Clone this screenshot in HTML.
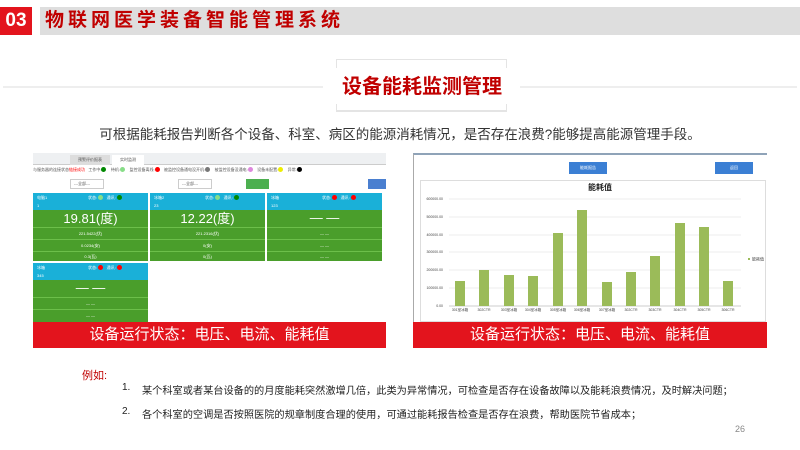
<!DOCTYPE html>
<html><head><meta charset="utf-8"><style>
*{margin:0;padding:0;box-sizing:border-box}
body{width:800px;height:450px;background:#fff;position:relative;overflow:hidden;font-family:"Liberation Sans","Noto Sans CJK SC",sans-serif}
.a{position:absolute}
.card{position:absolute;width:115px;background:#4a9e2b;color:#fff;font-size:4px}
.card .h{background:#1ab0d8;height:17px;position:relative}
.card .row{border-top:1px solid #6cbf4a;text-align:center}
.dot{display:inline-block;width:5px;height:5px;border-radius:50%;vertical-align:middle}
.banner{position:absolute;top:322px;height:26px;background:#e3141d;color:#fff;font-size:15px;text-align:center;line-height:26px}
.bar{position:absolute;width:10px;background:#9bbb59}
.xl{position:absolute;top:308px;font-size:3.5px;color:#444;width:24px;text-align:center}
</style></head><body>
<div class="a" style="left:0;top:7px;width:32px;height:28px;background:#e3141d;color:#fff;font-weight:bold;font-size:19px;line-height:28px;text-align:center">03</div>
<div class="a" style="left:40px;top:7px;width:760px;height:28px;background:#dedede"></div>
<div class="a" style="left:45px;top:7px;height:28px;line-height:28px;color:#c00000;font-weight:bold;font-size:19px;letter-spacing:4px;white-space:nowrap">物联网医学装备智能管理系统</div>

<div class="a" style="left:3px;top:86px;width:320px;height:2px;background:#eee"></div>
<div class="a" style="left:520px;top:86px;width:277px;height:2px;background:#eee"></div>
<div class="a" style="left:336px;top:59px;width:171px;height:53px;border:1px solid #e4e4e4;border-bottom:2px solid #e4e4e4"></div>
<div class="a" style="left:328px;top:68px;width:188px;height:36px;background:#fff"></div>
<div class="a" style="left:328px;top:73px;width:188px;text-align:center;color:#c00000;font-weight:bold;font-size:20px;line-height:28px;white-space:nowrap">设备能耗监测管理</div>

<div class="a" style="left:0;top:123px;width:800px;text-align:center;font-size:13.5px;color:#333;white-space:nowrap">可根据能耗报告判断各个设备、科室、病区的能源消耗情况，是否存在浪费?能够提高能源管理手段。</div>

<!-- left screenshot -->
<div class="a" style="left:33px;top:153px;width:353px;height:12px;background:#eef0f2;border-bottom:1px solid #ccc"></div>
<div class="a" style="left:70px;top:155px;width:40px;height:10px;background:#ddd;font-size:4px;line-height:10px;text-align:center;color:#555">预警评价报表</div>
<div class="a" style="left:112px;top:155px;width:32px;height:10px;background:#fff;font-size:4px;line-height:10px;text-align:center;color:#555">实时监测</div>
<div class="a" style="left:33px;top:166px;font-size:4px;color:#555;white-space:nowrap;line-height:7px">与服务器的连接状态<span style="color:red">链接成功</span>&nbsp;&nbsp; 工作中:<span class="dot" style="background:#080"></span>&nbsp;&nbsp;&nbsp; 待机:<span class="dot" style="background:#8d8"></span>&nbsp;&nbsp;&nbsp; 监控设备离线:<span class="dot" style="background:red"></span>&nbsp;&nbsp;&nbsp; 被监控设备通电没开机:<span class="dot" style="background:#777"></span>&nbsp;&nbsp;&nbsp; 被监控设备没通电:<span class="dot" style="background:#d8d"></span>&nbsp;&nbsp;&nbsp; 设备未配置:<span class="dot" style="background:#ee0"></span>&nbsp;&nbsp;&nbsp; 异常:<span class="dot" style="background:#000"></span></div>
<div class="a" style="left:70px;top:179px;width:34px;height:10px;border:1px solid #ccc;font-size:4px;line-height:8px;padding-left:3px;color:#555">---全部---</div>
<div class="a" style="left:178px;top:179px;width:34px;height:10px;border:1px solid #ccc;font-size:4px;line-height:8px;padding-left:3px;color:#555">---全部---</div>
<div class="a" style="left:246px;top:179px;width:23px;height:10px;background:#4caf50"></div>
<div class="a" style="left:368px;top:179px;width:18px;height:10px;background:#4a7fd0"></div>

<div class="card" style="left:33px;top:193px;height:68px"><div class="h"><span class="a" style="left:4px;top:2px">电脑1</span><span class="a" style="left:4px;top:10px">1</span><span class="a" style="left:55px;top:2px">状态: <span class="dot" style="background:#8d8"></span>&nbsp;&nbsp; 通讯: <span class="dot" style="background:#080"></span></span></div>
<div style="font-size:13px;text-align:center;height:17px;line-height:17px">19.81(度)</div><div class="row" style="height:12px;line-height:11px">221.5422(伏)</div><div class="row" style="height:12px;line-height:11px">0.0234(安)</div><div class="row" style="height:11px;line-height:10px">0.3(瓦)</div></div>
<div class="card" style="left:150px;top:193px;height:68px"><div class="h"><span class="a" style="left:4px;top:2px">冰箱2</span><span class="a" style="left:4px;top:10px">23</span><span class="a" style="left:55px;top:2px">状态: <span class="dot" style="background:#8d8"></span>&nbsp;&nbsp; 通讯: <span class="dot" style="background:#080"></span></span></div>
<div style="font-size:13px;text-align:center;height:17px;line-height:17px">12.22(度)</div><div class="row" style="height:12px;line-height:11px">221.2316(伏)</div><div class="row" style="height:12px;line-height:11px">0(安)</div><div class="row" style="height:11px;line-height:10px">0(瓦)</div></div>
<div class="card" style="left:267px;top:193px;height:68px"><div class="h"><span class="a" style="left:4px;top:2px">冰箱</span><span class="a" style="left:4px;top:10px">123</span><span class="a" style="left:55px;top:2px">状态: <span class="dot" style="background:red"></span>&nbsp;&nbsp; 通讯: <span class="dot" style="background:red"></span></span></div>
<div style="font-size:13px;text-align:center;height:17px;line-height:15px">— —</div><div class="row" style="height:12px;line-height:11px">— —</div><div class="row" style="height:12px;line-height:11px">— —</div><div class="row" style="height:11px;line-height:10px">— —</div></div>
<div class="card" style="left:33px;top:263px;height:59px"><div class="h"><span class="a" style="left:4px;top:2px">冰箱</span><span class="a" style="left:4px;top:10px">345</span><span class="a" style="left:55px;top:2px">状态: <span class="dot" style="background:red"></span>&nbsp;&nbsp; 通讯: <span class="dot" style="background:red"></span></span></div>
<div style="font-size:13px;text-align:center;height:17px;line-height:15px">— —</div><div class="row" style="height:12px;line-height:11px">— —</div><div class="row" style="height:12px;line-height:11px">— —</div></div>
<div class="banner" style="left:33px;width:353px">设备运行状态：电压、电流、能耗值</div>

<!-- right screenshot -->
<div class="a" style="left:413px;top:153px;width:354px;height:170px;border-top:2px solid #8fa3b8;border-left:1px solid #aaa;background:#fff"></div>
<div class="a" style="left:569px;top:162px;width:38px;height:12px;background:#3b7fd4;color:#fff;font-size:4px;line-height:12px;text-align:center">能耗报告</div>
<div class="a" style="left:715px;top:162px;width:38px;height:12px;background:#3b7fd4;color:#fff;font-size:4px;line-height:12px;text-align:center">返回</div>
<div class="a" style="left:420px;top:180px;width:346px;height:142px;border:1px solid #ddd"></div>
<div class="a" style="left:560px;top:182px;width:80px;text-align:center;font-size:8px;font-weight:bold;color:#222">能耗值</div>
<svg class="a" style="left:0;top:0" width="800" height="450">
<g stroke="#ddd" stroke-width="0.6">
<line x1="449" y1="199" x2="741" y2="199"/><line x1="449" y1="217" x2="741" y2="217"/><line x1="449" y1="235" x2="741" y2="235"/><line x1="449" y1="252" x2="741" y2="252"/><line x1="449" y1="270" x2="741" y2="270"/><line x1="449" y1="288" x2="741" y2="288"/></g>
<line x1="449" y1="306" x2="741" y2="306" stroke="#999" stroke-width="0.6"/>
<g font-size="3.5" fill="#444" text-anchor="end" font-family="Liberation Sans">
<text x="443" y="200">600000.00</text><text x="443" y="218">500000.00</text><text x="443" y="236">400000.00</text><text x="443" y="253">300000.00</text><text x="443" y="271">200000.00</text><text x="443" y="289">100000.00</text><text x="443" y="307">0.00</text></g>
<rect x="748" y="258" width="2" height="2" fill="#9bbb59"/><text x="752" y="260.5" font-size="4" fill="#444">能耗值</text>
</svg>
<div class="bar" style="left:455px;top:281px;height:25px"></div>
<div class="bar" style="left:479px;top:270px;height:36px"></div>
<div class="bar" style="left:504px;top:275px;height:31px"></div>
<div class="bar" style="left:528px;top:276px;height:30px"></div>
<div class="bar" style="left:553px;top:233px;height:73px"></div>
<div class="bar" style="left:577px;top:210px;height:96px"></div>
<div class="bar" style="left:602px;top:282px;height:24px"></div>
<div class="bar" style="left:626px;top:272px;height:34px"></div>
<div class="bar" style="left:650px;top:256px;height:50px"></div>
<div class="bar" style="left:675px;top:223px;height:83px"></div>
<div class="bar" style="left:699px;top:227px;height:79px"></div>
<div class="bar" style="left:723px;top:281px;height:25px"></div>
<div class="xl" style="left:448px">301室冰箱</div><div class="xl" style="left:472px">302CTR</div><div class="xl" style="left:497px">303室冰箱</div><div class="xl" style="left:521px">304室冰箱</div><div class="xl" style="left:546px">305室冰箱</div><div class="xl" style="left:570px">306室冰箱</div><div class="xl" style="left:595px">307室冰箱</div><div class="xl" style="left:619px">302CTR</div><div class="xl" style="left:643px">303CTR</div><div class="xl" style="left:668px">304CTR</div><div class="xl" style="left:692px">305CTR</div><div class="xl" style="left:716px">306CTR</div>
<div class="banner" style="left:413px;width:354px">设备运行状态：电压、电流、能耗值</div>

<div class="a" style="left:82px;top:367px;font-size:11px;color:#c00000">例如:</div>
<div class="a" style="left:122px;top:382px;font-size:10px;color:#222">1.</div>
<div class="a" style="left:142px;top:382px;font-size:10.2px;color:#222;white-space:nowrap">某个科室或者某台设备的的月度能耗突然激增几倍，此类为异常情况，可检查是否存在设备故障以及能耗浪费情况，及时解决问题；</div>
<div class="a" style="left:122px;top:406px;font-size:10px;color:#222">2.</div>
<div class="a" style="left:142px;top:406px;font-size:10.2px;color:#222;white-space:nowrap">各个科室的空调是否按照医院的规章制度合理的使用，可通过能耗报告检查是否存在浪费，帮助医院节省成本；</div>
<div class="a" style="left:735px;top:424px;font-size:9px;color:#888">26</div>
</body></html>
